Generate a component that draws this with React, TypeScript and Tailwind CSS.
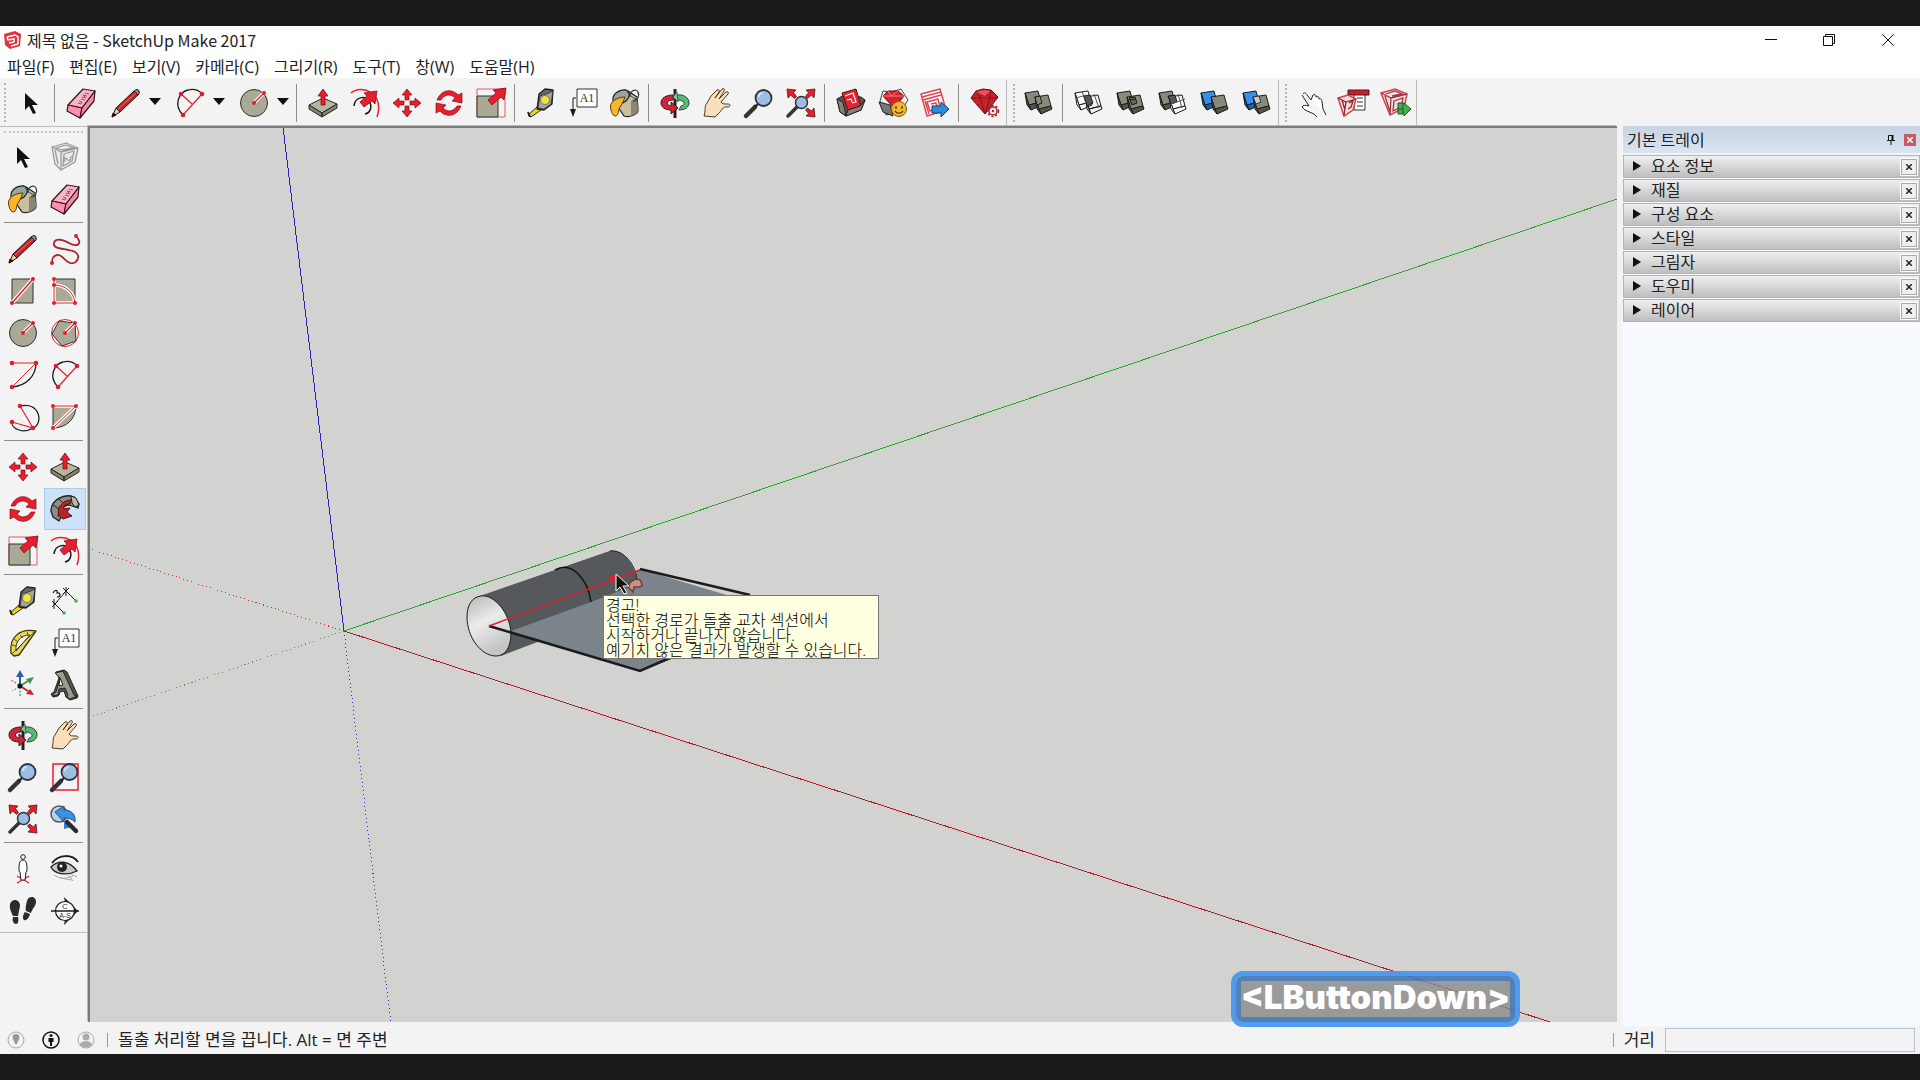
import type { ReactNode } from 'react';

const RED = '#e81e2d';
const INK = '#1c1c1c';
const STONE = '#a9a996';

const dots = (points: number[][], r = 2) =>
  points.map(([x, y]) => <circle key={`${x}-${y}`} cx={x} cy={y} r={r} fill="#d81f33" />);

const lens = (
  <>
    <path d="M2 28L11 19" stroke="#333" strokeWidth="4.5" strokeLinecap="round" />
    <path d="M11 19L14 16" stroke="#222" strokeWidth="2" />
    <circle cx="19.5" cy="10" r="8" fill="#9dbde2" stroke="#2b3440" strokeWidth="1.8" />
    <path d="M14.5 9a5 5 0 0 1 4-4" stroke="#d8e8f8" fill="none" strokeWidth="1.5" />
  </>
);

const cornerArrows = (
  <g fill={RED} stroke="#3a0d10" strokeWidth=".7">
    <path d="M1 1l9 1-2.5 2.5 3 4-2 2-4-3.5L2 10z" />
    <path d="M29 1l-9 1 2.5 2.5-3 4 2 2 4-3.5L28 10z" />
    <path d="M29 29l-9-1 2.5-2.5-3-3.5 2-2 4 3L28 20z" />
  </g>
);

const solid = (dx: number, dy: number, fill: string, side: string) => (
  <g transform={`translate(${dx} ${dy})`} stroke={INK} strokeWidth="1" strokeLinejoin="round">
    <path d="M1 3L14 1l3 11-12 3z" fill={fill} />
    <path d="M5 15l12-3 1 3-11 5z" fill={side} />
    <path d="M1 3l4 12 2 5-4-5z" fill={side} />
  </g>
);

const icons: Record<string, ReactNode> = {
  select: <path d="M9 5v17l4-4 4 8 3-1-4-8h6z" fill="#111" />,
  component: (
    <g fill="none" stroke="#9a9a9a" strokeWidth="1.3" strokeLinejoin="round">
      <path d="M2 5L16 1l12 5-3 14-14 8L5 22z" fill="#ececec" />
      <path d="M2 5l9 5 17-4M11 10v18M5 8l3 14M14 12l10-3-2 10-9 5zM6 6l10-3 8 3-12 2z" />
      <path d="M15 20c-1-4 2-4 3-2s3-1 3-4M13 15l4 2" />
    </g>
  ),
  eraser: (
    <g stroke="#33151c" strokeWidth="1.2" strokeLinejoin="round">
      <path d="M17 1l12 2-13 17L2 17z" fill="#f7b5c8" />
      <path d="M2 17l-1 6 13 7 2-10z" fill="#ff8fb0" />
      <path d="M29 3l-1 10-14 17 2-10z" fill="#f48aa8" />
      <path d="M12 15l3 1 1-2-3-1m2-2l4 1m-3-3l4 1-3-3 4 1m-2-3l4 1" stroke="#8c3550" fill="none" strokeWidth=".8" />
    </g>
  ),
  pencil: (
    <g stroke="#2a1010" strokeWidth="1" strokeLinejoin="round">
      <path d="M1 29l4-9 4 4z" fill="#e0cda0" />
      <path d="M5 20L23 3l4 4L9 24z" fill="#c3252e" />
      <path d="M23 3q4-3 5 0t-1 4z" fill="#8b8b8b" />
      <path d="M7 21L25 5" stroke="#ef6a67" fill="none" />
      <path d="M1 29l1-4 3 2z" fill="#111" />
    </g>
  ),
  freehand: (
    <>
      <path
        d="M26 2C34 11 26 13 19 9S5 4 4 9c-2 7 14 5 21 9s1 13-5 11-8-9-13-8-5 5-5 8"
        fill="none"
        stroke="#a82431"
        strokeWidth="1.8"
      />
      {dots([[26, 2], [2, 29]])}
    </>
  ),
  rectangle: (
    <>
      <path d="M4 3h21v24H4z" fill={STONE} stroke="#333" />
      <path d="M4 27L25 3" stroke="#fff" strokeWidth="4" />
      <path d="M4 27L25 3" stroke={RED} strokeWidth="1.5" />
      {dots([[4, 27], [25, 3]])}
    </>
  ),
  rotatedRectangle: (
    <>
      <path d="M4 3h21v24H4z" fill={STONE} stroke="#333" />
      <path d="M4 3v24h21M4 9c12 0 20 8 21 18" stroke="#fff" strokeWidth="3.5" fill="none" />
      <path d="M4 3v24h21M4 9c12 0 20 8 21 18" stroke={RED} fill="none" />
      {dots([[4, 3], [4, 9], [4, 27], [25, 27]])}
    </>
  ),
  circle: (
    <>
      <circle cx="15" cy="15" r="13.5" fill={STONE} stroke="#333" />
      <path d="M15 15l10-10" stroke="#fff" strokeWidth="3.5" />
      <path d="M15 15l10-10" stroke={RED} strokeWidth="1.3" />
      {dots([[15, 15], [25, 5]])}
    </>
  ),
  polygon: (
    <>
      <circle cx="15" cy="15" r="13.5" fill="#fff" stroke={RED} />
      <path d="M25 5L9 3 2 16l10 12 14-5z" fill={STONE} stroke="#333" />
      <path d="M15 15l10-10" stroke="#fff" strokeWidth="3.5" />
      <path d="M15 15l10-10" stroke={RED} strokeWidth="1.3" />
      {dots([[15, 15], [25, 5]])}
    </>
  ),
  arcCenter: (
    <>
      <path d="M28 3c0 13-10 23-24 24" stroke={INK} fill="none" strokeWidth="1.3" />
      <path d="M4 3h24L4 27" stroke={RED} fill="none" />
      {dots([[4, 3], [28, 3], [4, 27]], 2.3)}
    </>
  ),
  arc: (
    <>
      <path d="M8 27C-2 17 4 4 13 2c7-2 12 1 14 4" stroke={INK} fill="none" strokeWidth="1.3" />
      <path d="M6 6l11 10M8 27L27 6" stroke={RED} fill="none" strokeWidth="1.2" />
      {dots([[6, 6], [27, 6], [8, 27]], 2.3)}
    </>
  ),
  arcThree: (
    <>
      <path d="M12 4c20-5 24 18 13 22-12 7-22-1-21-6" stroke={INK} fill="none" strokeWidth="1.3" />
      <path d="M12 4l13 22L4 20" stroke={RED} fill="none" strokeWidth="1.2" />
      {dots([[12, 4], [25, 26], [4, 20]], 2.3)}
    </>
  ),
  pie: (
    <>
      <path d="M3 4h23c0 12-9 22-23 22z" fill={STONE} stroke="#333" />
      <path d="M3 4h23L3 26" stroke="#fff" strokeWidth="3.5" fill="none" />
      <path d="M3 4h23L3 26" stroke={RED} fill="none" />
      {dots([[3, 4], [26, 4], [3, 26]])}
    </>
  ),
  pushPull: (
    <g stroke="#262620" strokeLinejoin="round">
      <path d="M1 17l14-7 14 6-15 9z" fill="#b5b5a0" />
      <path d="M1 17v4l13 8v-4zM29 16v4l-15 9v-4z" fill="#84846f" />
      <path d="M15 1l5 7h-3v9h-4V8h-3z" fill={RED} stroke="#7c1017" strokeWidth=".8" />
    </g>
  ),
  offset: (
    <>
      <path d="M1 5C12-4 35 5 27 29" stroke={RED} fill="none" strokeWidth="1.5" />
      <path d="M4 18c1-9 11-11 15-5s1 12-4 13" stroke={INK} fill="none" strokeWidth="1.5" />
      <path d="M27 3l-2 13-3-3-8 6-4-5 7-6-3-3z" fill={RED} stroke="#7c1017" strokeWidth=".8" />
    </>
  ),
  move: (
    <g fill={RED} stroke="#7c1017" strokeWidth=".7">
      <path d="M15 1l5 6h-3v5h-4V7h-3z" />
      <path d="M15 29l5-6h-3v-5h-4v5h-3z" />
      <path d="M1 15l6-5v3h5v4H7v3z" />
      <path d="M29 15l-6-5v3h-5v4h5v3z" />
    </g>
  ),
  rotate: (
    <g fill={RED} stroke="#7c1017" strokeWidth=".7">
      <path d="M3 12C8 0 19 1 24 7l4-2v10l-10-2 3-3C16 5 10 7 7 12z" />
      <path d="M27 18C22 30 11 29 6 23l-4 2V15l10 2-3 3c5 5 11 3 14-2z" />
    </g>
  ),
  scale: (
    <>
      <path d="M1 1h28v28H1z" fill="none" stroke="#e05a68" />
      <path d="M1 8h21v21H1z" fill={STONE} stroke="#333" />
      <path d="M30 0l-2 12-3-3-9 8-4-5 8-7-3-3z" fill={RED} stroke="#7c1017" strokeWidth=".8" />
    </>
  ),
  followMe: (
    <g strokeLinejoin="round">
      <path d="M1 17C1 6 14-1 24 3l5 7-1 4-9-3c-6 0-8 5-7 10l-3 6-6-4z" fill="#8d8d82" stroke="#222" strokeWidth="1.3" />
      <path d="M21 2l5 2 3 7-4 2-3-4z" fill="#b8b8a8" stroke="#222" />
      <path d="M3 11l6 4-1 8M9 5l5 5" fill="none" stroke="#222" />
      <path d="M21 6l-1 4c-5 0-7 2-6 5l6-1-3 4 5 4-9 3c-5-3-6-8-3-13 3-4 7-6 11-6z" fill="#b9232c" stroke="#5d0e12" />
    </g>
  ),
  tape: (
    <g stroke="#222" strokeLinejoin="round">
      <path d="M2 27l9-8 4 3-10 7z" fill="#e8d522" />
      <path d="M2 24l2 5" strokeWidth="2" />
      <path d="M13 6l6-5 8 1-1 14-8 6-7-1z" fill="#666a64" strokeWidth="1.3" />
      <path d="M14 8l9-3 4-2-2 13-7 5-6-1z" fill="#a4a69c" strokeWidth=".7" />
      <circle cx="19" cy="12" r="4.5" fill="#efe53b" stroke="#777" />
    </g>
  ),
  dimension: (
    <>
      <path d="M5 18L16 5M5 18l9 9M16 5l9 9M2 15l6 6m0-6l-6 6m2-8v10M13 2l6 6m0-6l-6 6m3-7v9" stroke={INK} fill="none" />
      <path d="M3 7c2-4 5-3 4 0 4-1 4 4 0 4" stroke={INK} fill="none" strokeWidth="1.2" />
      <circle cx="14" cy="27" r="1.8" fill="#46b450" />
      <circle cx="26" cy="15" r="1.8" fill="#46b450" />
    </>
  ),
  protractor: (
    <g stroke="#3d3510" strokeLinejoin="round">
      <path d="M28 3C12 0 1 9 3 25l3 3 5-1z" fill="#ead957" strokeWidth="1.3" />
      <path d="M22 7C13 7 7 13 8 23z" fill="#f4f4f4" />
      <path d="M5 25L26 4M4 17l4 1m-2-7l4 3m2-7l3 3m4-6l1 3" fill="none" strokeWidth=".8" />
    </g>
  ),
  text: (
    <>
      <path d="M9 1h20v18H9z" fill="#fff" stroke="#333" />
      <path d="M8 10H5v11" stroke={INK} fill="none" />
      <path d="M2 21h6l-3 8z" fill={INK} />
      <text x="19" y="14" textAnchor="middle" fontSize="12" fontFamily="Liberation Serif, serif" fill="#333">
        A1
      </text>
    </>
  ),
  axes: (
    <g transform="translate(-2 0)">
      <path d="M14 16V5" stroke="#2f5fa5" strokeWidth="2" />
      <path d="M14 0l4 7h-8z" fill="#2f5fa5" />
      <path d="M14 16l8-5" stroke="#3e9a4b" strokeWidth="2" />
      <path d="M28 7l-4 7-4-5z" fill="#3e9a4b" />
      <path d="M14 16l8 5" stroke="#c4202c" strokeWidth="2" />
      <path d="M28 25l-8-1 4-5z" fill="#c4202c" />
      <path d="M14 17v10" stroke="#2f5fa5" strokeDasharray="2 1.5" />
      <path d="M13 17l-7 4" stroke="#3e9a4b" strokeDasharray="2 1.5" />
      <path d="M13 15l-8-5" stroke="#c4202c" strokeDasharray="2 1.5" />
      <circle cx="14" cy="16" r="2.5" fill="#111" />
    </g>
  ),
  text3d: (
    <g stroke="#222" strokeLinejoin="round">
      <path d="M6 2l8-2 3 2 11 24-1 2-7 2-4-3-2-6-4 1-2 4-5 1-2-3 3-2 5-14z" fill="#55554e" />
      <path d="M5 3l8-2 11 24 3 1-7 3-3-2 1-2-3-7-6 1-1 4 2 1-7 2v-2l3-2 4-14z" fill="#9a9a90" />
      <path d="M10 8l3 7-4 1z" fill="#f3f3f3" />
    </g>
  ),
  paint: (
    <g strokeLinejoin="round" transform="translate(-1 0)">
      <path d="M5 13L19 3l9 6 1 13c0 4-8 8-14 6z" fill="#c9bf9f" stroke="#222" strokeWidth="1.3" />
      <path d="M22 13l6-4 1 13c0 3-4 5-7 6z" fill="#8a8672" />
      <path d="M4 13C3 6 10 1 17 2c5 2 4 7 0 11-4 3-9 3-13 0z" fill="#93a6a5" stroke="#222" strokeWidth="1.3" />
      <path d="M18 3c2 3 4 6 9 8" fill="none" stroke="#333" />
      <path d="M21 9c-1-6 6-9 8-5s-1 9-5 9" fill="none" stroke="#333" strokeWidth="1.2" />
      <path d="M16 9C8 9-1 14 2 22c1 4 2 6 5 6 3-1 2-6 4-9s3-5 5-10z" fill="#f8b62d" stroke="#5a3b00" />
    </g>
  ),
  orbit: (
    <g strokeLinejoin="round">
      <path d="M15 1v29" stroke="#222" strokeWidth="3" />
      <path d="M17 7c7-1 12 3 12 8 0 4-4 7-10 7l2-4c5-1 4-6-4-6z" fill="#57b87c" stroke="#1d4f31" />
      <path d="M13 7C6 7 1 10 1 15c0 4 4 7 10 7v4l7-6-7-6v4c-5-1-5-6 2-6z" fill="#c6283a" stroke="#551018" />
      <path d="M17 4l-4 5 5 5z" fill="#7dcc98" stroke="#1d4f31" strokeWidth=".7" />
    </g>
  ),
  pan: (
    <path
      d="M2 28C4 22 2 19 5 15l4-7 6-6c2-1 3 1 2 2l-4 6 7-9c2-1 3 0 2 2l-5 8 7-7c2-1 3 1 2 2l-7 8c1 2 3 2 7 2 3 0 2 3 0 3-6-1-6 4-10 7l-3 3z"
      fill="#f9dfb8"
      stroke="#4a3a28"
      strokeLinejoin="round"
    />
  ),
  zoom: lens,
  zoomWindow: (
    <>
      <path d="M3 2h25v26H3z" fill="none" stroke={RED} strokeWidth="1.5" />
      {lens}
    </>
  ),
  zoomExtents: (
    <>
      <path d="M2 28l9-9" stroke="#333" strokeWidth="3.5" strokeLinecap="round" />
      {cornerArrows}
      <circle cx="15.5" cy="14.5" r="6" fill="#9dbde2" stroke="#2b3440" strokeWidth="1.5" />
    </>
  ),
  previous: (
    <g strokeLinejoin="round">
      <circle cx="9" cy="10" r="8" fill="#b8cfe8" stroke="#555" strokeWidth="1.5" />
      <path d="M5 8l9-6v4c7 0 12 4 11 12-3-3-6-4-11-4v4z" fill="#3d8fe0" stroke="#1d4f86" />
      <path d="M14 17c2 4 6 5 8 6l-8 2" fill="#2f7fd0" />
      <path d="M17 18l9 9" stroke="#2b2b2b" strokeWidth="4.5" strokeLinecap="round" />
    </g>
  ),
  positionCamera: (
    <>
      <path d="M9 29l12-7M9 22l12 7" stroke={RED} strokeWidth="1.3" />
      <path d="M15 6c-4 0-4 5-4 11l1 1 1 8h4l1-8 1-1c0-6 0-11-4-11z" fill="#fff" stroke={INK} />
      <circle cx="15" cy="3" r="2.3" fill="#fff" stroke={INK} />
    </>
  ),
  lookAround: (
    <>
      <path d="M2 9C9 0 22 0 28 8" stroke={INK} fill="none" strokeWidth="2" />
      <path d="M1 13c7-7 18-7 26 4-8 4-18 4-24-1z" fill="#c8c8c8" stroke="#222" strokeWidth="1.3" />
      <circle cx="12" cy="13" r="5" fill="#222" />
      <circle cx="11" cy="12" r="1.5" fill="#fff" />
      <path d="M4 21c6 4 12 4 19 1M10 24l12 2m-4-5l5 6m-2-7l6 3" stroke="#aaa" fill="none" />
    </>
  ),
  walk: (
    <g fill="#2b2b2b">
      <path d="M2 8c2-6 10-5 10 2l-2 10H5C3 16 1 12 2 8z" />
      <path d="M5 21h5c1 4 0 7-2 7-3 0-4-4-3-7z" />
      <path d="M19 5c1-5 9-6 9 1 0 4-4 7-5 11l-5-2c-1-3 0-6 1-10z" />
      <path d="M17 16l5 2c-1 4-4 7-6 6-2-2-1-5 1-8z" />
    </g>
  ),
  section: (
    <>
      <path d="M14 1l14 14-14 14 1-5 9-9-9-9z" fill={INK} />
      <circle cx="15" cy="15" r="9.5" fill="#fff" stroke={INK} strokeWidth="1.2" />
      <path d="M1 15h28" stroke={INK} strokeWidth="1.5" />
      <text x="15" y="13" textAnchor="middle" fontSize="8" fontFamily="Liberation Sans, sans-serif" fill="#333">
        C
      </text>
      <text x="15" y="22" textAnchor="middle" fontSize="7" fontFamily="Liberation Sans, sans-serif" fill="#333">
        A-S
      </text>
    </>
  ),
  warehouse: (
    <g strokeLinejoin="round">
      <path d="M1 11l7-4 17 2 4 3-4 10-15 6-6-4z" fill="#5d544d" stroke="#222" />
      <path d="M6 5l14-4 5 17-13 4z" fill="#e02531" stroke="#5d0e12" />
      <path d="M9 8l8-3 3 9-4 1M11 12l4-1 1 3" fill="none" stroke="#fff" strokeWidth="1.2" />
      <path d="M1 11l6 3 3 14-6-4zM29 12l-5 6-12 4-2 6 15-6z" fill="#8a8078" stroke="#222" />
    </g>
  ),
  extensionWarehouse: (
    <g strokeLinejoin="round">
      <path d="M2 13l3-10 9 1 9-3 7 11-7 11-15 4z" fill="#eee" stroke="#444" />
      <path d="M5 8l5-5h10l6 5-10 12z" fill="#d7212e" stroke="#5d0e12" />
      <path d="M5 8h21M10 3l3 5 7-5" stroke="#f78080" fill="none" />
      <path d="M1 14l11 3 3 11-10-4z" fill="#777" stroke="#222" />
      <circle cx="21" cy="21" r="7.5" fill="#f4b72b" stroke="#8b5d0a" />
      <path d="M18 18v3m6-3v3m-7 2c2 3 6 3 8 0" stroke="#3d2a00" fill="none" strokeWidth="1.2" />
    </g>
  ),
  layout: (
    <g strokeLinejoin="round">
      <path d="M1 6l19-5 6 21-19 6z" fill="#fff" stroke="#e0434f" strokeWidth="1.5" />
      <path d="M2 9l19-5M3 12l18-5M7 14l11-3 2 9-10 3zM11 16l5-1 1 4-5 1M5 13l4 13" stroke="#e0434f" fill="none" strokeWidth="1.5" />
      <path d="M12 18h9v-4l8 7-8 8v-4h-9z" fill="#2f8be0" stroke="#123c68" />
    </g>
  ),
  extensionManager: (
    <g strokeLinejoin="round">
      <path d="M1 10l5-7 7-2 8 1 7 7-13 17z" fill="#c8202c" stroke="#5d0e12" />
      <path d="M1 10h27M6 3l4 7 4-8 6 8 1-8M10 10l5 16 5-16" stroke="#7d0f18" fill="none" strokeWidth=".8" />
      <path d="M6 4l8-2 6 1-5 5z" fill="#ef5058" />
      <circle cx="23" cy="23" r="4" fill="#f3f3f3" stroke="#a8232c" strokeWidth="1.5" />
      <circle cx="23" cy="23" r="5.5" fill="none" stroke="#a8232c" strokeWidth="1.5" strokeDasharray="2 2" />
      <circle cx="23" cy="23" r="1.2" fill="#a8232c" />
    </g>
  ),
  outerShell: (
    <>
      {solid(0, 2, '#8a8a7c', '#55554a')}
      {solid(10, 6, '#8a8a7c', '#55554a')}
      <path d="M11 9l5-1 2 7-5 2z" fill="#8a8a7c" stroke={INK} />
    </>
  ),
  intersect: (
    <>
      {solid(0, 2, '#fff', '#fff')}
      {solid(10, 6, 'none', 'none')}
      <path d="M10 8l6-1 3 8-6 3z" fill="#555" stroke={INK} />
      <path d="M2 10l10-3M8 3l4 13M20 6l5 14" stroke="#555" fill="none" />
    </>
  ),
  union: (
    <>
      {solid(0, 2, '#8a8a7c', '#55554a')}
      {solid(10, 6, '#8a8a7c', '#55554a')}
      <path d="M13 10l6-1 2 6-5 2zM14 12l6-1" fill="#66665c" stroke={INK} />
    </>
  ),
  subtract: (
    <>
      {solid(0, 2, '#8a8a7c', '#55554a')}
      {solid(10, 6, '#fff', '#fff')}
      <path d="M10 8l7-1 2 7-6 2z" fill="#555" stroke={INK} />
      <path d="M20 6l4 14M13 16l14-5" stroke="#555" fill="none" />
    </>
  ),
  trim: (
    <>
      {solid(0, 2, '#3490e8', '#1c5fa8')}
      {solid(10, 6, '#8a8a7c', '#55554a')}
    </>
  ),
  split: (
    <>
      {solid(0, 2, '#3490e8', '#1c5fa8')}
      {solid(10, 6, '#8a8a7c', '#55554a')}
      <path d="M11 9l6-1 2 6-5 2z" fill="#c9c9d0" stroke="#333" />
    </>
  ),
  interact: (
    <path
      d="M7 6c1-2 3-1 4 1l4 5 2-5c2-1 3 0 3 2 2-1 3 0 3 2 2-1 3 1 3 3l1 7 3 6M21 29l-3-3-9-4-3-3c1-2 3-2 7-1L6 7"
      fill="#fff"
      stroke="#222"
      strokeLinejoin="round"
    />
  ),
  componentOptions: (
    <>
      <path d="M16 4h11v18H16z" fill="#fff" stroke="#333" />
      <path d="M19 10h6m-6 4h6m-6 4h6" stroke="#333" />
      <path d="M10 2h21v5H10z" fill="#c4202c" stroke="#5d0e12" />
      <path d="M0 10l10-3 8 4-3 11-9 6z" fill="#f0dfe0" stroke="#d8404c" strokeWidth="1.5" />
      <path d="M0 10l8 4 10-3M8 14l-2 13M4 12l3 10M11 15l4-2-2 6-3 2" fill="none" stroke="#8a2830" strokeWidth="1.3" />
    </>
  ),
  componentAttributes: (
    <>
      <path d="M1 5l14-4 12 5-3 14-14 7z" fill="#f0dfe0" stroke="#d8404c" strokeWidth="1.5" />
      <path d="M1 5l10 5 16-4M11 10l-1 17M5 8l5 16M14 13l9-3-2 9-8 4zM6 6l9-3 7 3-10 2" fill="none" stroke="#9a3a42" strokeWidth="1.3" />
      <path d="M18 15h6l7 6-7 7v-2h-6z" fill="#45ad4e" stroke="#1c5a24" />
      <path d="M18 21h5M23 15v11" stroke="#1c5a24" />
    </>
  ),
};

const Icon = ({ name }: { name: string }) => (
  <svg width="30" height="30" viewBox="0 0 30 30" className="shrink-0 overflow-visible" aria-hidden="true">
    {icons[name]}
  </svg>
);

function ToolButton({ name, active = false }: { name: string; active?: boolean }) {
  return (
    <button
      type="button"
      aria-label={name}
      className={
        active
          ? 'flex size-[42px] items-center justify-center border border-[#a9cdef] bg-[#cce2f8]'
          : 'flex size-[42px] items-center justify-center'
      }
    >
      <Icon name={name} />
    </button>
  );
}

function DropdownTool({ name }: { name: string }) {
  return (
    <div className="flex h-[42px] w-16 items-center">
      <button type="button" aria-label={name} className="flex h-full w-[47px] items-center justify-center">
        <Icon name={name} />
      </button>
      <button type="button" aria-label={`${name} options`} className="h-full">
        <svg width="12" height="12" viewBox="0 0 12 12" aria-hidden="true">
          <path d="M0 1h12L6 8z" fill="#111" />
        </svg>
      </button>
    </div>
  );
}

const Separator = () => <div className="ml-0.5 mr-[5px] h-[38px] w-px bg-[#8f8f8f]" />;

const Grip = () => (
  <div className="flex h-[46px] w-3 border-l border-[#b9b9b9] py-1 pl-1.5">
    <div className="border-l-2 border-dotted border-[#b5b5b5]" />
  </div>
);

const topGroups = [
  ['pushPull', 'offset', 'move', 'rotate', 'scale'],
  ['tape', 'text', 'paint'],
  ['orbit', 'pan', 'zoom', 'zoomExtents'],
  ['warehouse', 'extensionWarehouse', 'layout'],
  ['extensionManager'],
];

const sideGroups = [
  ['select', 'component', 'paint', 'eraser'],
  ['pencil', 'freehand', 'rectangle', 'rotatedRectangle', 'circle', 'polygon', 'arcCenter', 'arc', 'arcThree', 'pie'],
  ['move', 'pushPull', 'rotate', 'followMe', 'scale', 'offset'],
  ['tape', 'dimension', 'protractor', 'text', 'axes', 'text3d'],
  ['orbit', 'pan', 'zoom', 'zoomWindow', 'zoomExtents', 'previous'],
  ['positionCamera', 'lookAround', 'walk', 'section'],
];

const menus = ['파일(F)', '편집(E)', '보기(V)', '카메라(C)', '그리기(R)', '도구(T)', '창(W)', '도움말(H)'];

const panels = ['요소 정보', '재질', '구성 요소', '스타일', '그림자', '도우미', '레이어'];

function TitleBar() {
  return (
    <header className="flex h-7 items-center bg-white pl-1">
      <svg width="17" height="18" viewBox="0 0 17 18" aria-hidden="true">
        <path d="M0 3l11-3 6 3-1 12-10 3-5-4z" fill="#e0333c" />
        <path d="M3 6l8-2 3 2v7l-7 2M3 6l1 3 6-1v3l-5 1" fill="none" stroke="#fff" strokeWidth="1.5" />
      </svg>
      <h1 className="ml-1.5 flex-1 font-['Noto_Sans_CJK_KR',sans-serif] text-base text-[#222]">
        제목 없음 - SketchUp Make 2017
      </h1>
      <button type="button" aria-label="최소화" className="flex h-full w-[58px] items-center justify-center">
        <svg width="12" height="12" aria-hidden="true">
          <path d="M0 5.5h12" stroke="#111" />
        </svg>
      </button>
      <button type="button" aria-label="이전 크기로" className="flex h-full w-[58px] items-center justify-center">
        <svg width="12" height="12" fill="none" stroke="#111" aria-hidden="true">
          <path d="M.5 2.5h9v9h-9zM2.5 2.5v-2h9v9h-2" />
        </svg>
      </button>
      <button type="button" aria-label="닫기" className="flex h-full w-[62px] items-center justify-center pr-0.5">
        <svg width="12" height="12" stroke="#111" aria-hidden="true">
          <path d="M0 0l12 12M12 0L0 12" />
        </svg>
      </button>
    </header>
  );
}

function MenuBar() {
  return (
    <nav className="flex h-6 items-center gap-[15px] bg-white pt-0.5 pl-[7px] text-base leading-5 text-[#222]">
      {menus.map((menu) => (
        <button key={menu} type="button">
          {menu}
        </button>
      ))}
    </nav>
  );
}

function TopToolbar() {
  return (
    <div className="flex h-12 items-center pt-px">
      <div className="flex h-full w-2.5 py-1 pl-1">
        <div className="border-l-2 border-dotted border-[#b5b5b5]" />
      </div>
      <ToolButton name="select" />
      <Separator />
      <ToolButton name="eraser" />
      <DropdownTool name="pencil" />
      <DropdownTool name="arc" />
      <DropdownTool name="circle" />
      {topGroups.map((group) => (
        <div key={group[0]} className="flex items-center">
          <Separator />
          {group.map((name) => (
            <ToolButton key={name} name={name} />
          ))}
        </div>
      ))}
      <Grip />
      <ToolButton name="outerShell" />
      <Separator />
      <ToolButton name="intersect" />
      <ToolButton name="union" />
      <ToolButton name="subtract" />
      <ToolButton name="trim" />
      <ToolButton name="split" />
      <Grip />
      <ToolButton name="interact" />
      <ToolButton name="componentOptions" />
      <ToolButton name="componentAttributes" />
      <div className="h-[46px] w-px bg-[#b9b9b9]" />
    </div>
  );
}

function SideToolbar() {
  return (
    <aside className="w-[88px] shrink-0">
      <div className="border-y border-r border-[#bdbdbd] pt-1">
        <div className="mx-1 mb-[3px] border-t-2 border-dotted border-[#c4c4c4]" />
        {sideGroups.map((group, index) => (
          <div key={group[0] + index}>
            {index > 0 && <div className="mx-1 mt-0.5 mb-[5px] h-px bg-[#8f8f8f]" />}
            <div className="grid grid-cols-[42px_42px] pl-0.5">
              {group.map((name) => (
                <ToolButton key={name} name={name} active={name === 'followMe'} />
              ))}
            </div>
          </div>
        ))}
      </div>
    </aside>
  );
}

function Scene() {
  return (
    <svg className="absolute inset-0 size-full" aria-hidden="true">
      <defs>
        <linearGradient id="inside" x1="0" y1="0" x2=".4" y2="1">
          <stop offset="0" stopColor="#b4b4b4" />
          <stop offset=".5" stopColor="#ececec" />
          <stop offset="1" stopColor="#c4c4c4" />
        </linearGradient>
      </defs>
      {/* axes */}
      <g transform="translate(-90 -128)" fill="none" shapeRendering="crispEdges">
        <path d="M283 127L344 631" stroke="#2626b8" />
        <path d="M344 631L391 1024" stroke="#2f2fa8" strokeDasharray="1 3" />
        <path d="M344 631L1617 199" stroke="#2fa52f" />
        <path d="M344 631L90 717" stroke="#5f8a5f" strokeDasharray="1 3" />
        <path d="M344 631L1550 1022" stroke="#b01c2a" />
        <path d="M344 631L90 549" stroke="#c0303c" strokeDasharray="1 3" />
      </g>
      {/* cylinder crossed by the flat face */}
      <g transform="translate(-90 -128)">
        <path d="M480 596L610 551C622 549 634 564 636 582L540 641 501 656z" fill="#55595c" />
        <path d="M489 626L640 569 790 614 640 671z" fill="#7b838b" />
        <path d="M482 596L610 551C624 549 636 566 637 584L591 602 511 631z" fill="#55595c" />
        <path d="M610 551C624 549 636 566 637 580" fill="none" stroke="#222" />
        <path d="M555 570C572 560 588 580 591 602" fill="none" stroke="#111" strokeWidth="1.5" />
        <path
          d="M481 596C494 594 510 613 511 633C511 648 505 656 496 656C481 656 467 637 467 617C467 605 472 597 481 596z"
          fill="url(#inside)"
          stroke="#1c1c1c"
        />
        <path d="M489 626L640 671 672 657M640 569L750 595" fill="none" stroke="#1b1b1d" strokeWidth="2.5" />
        <path d="M489 626L640 570" stroke="#d8222c" strokeWidth="1.5" />
        <circle cx="613" cy="578" r="3" fill="#e81e2d" />
        <path d="M629 588c-1-7 8-11 12-7l1 5-3 1h-5l-1 5z" fill="#b49a8c" stroke="#9c2a30" strokeWidth="1.5" />
        <path d="M616 574v17l4-4 4 7 3-1-4-7h6z" fill="#111" stroke="#fff" />
      </g>
    </svg>
  );
}

function Viewport() {
  return (
    <main className="relative mb-1 flex-1 border-t-2 border-l-2 border-[#7b7b7b] bg-[#d2d2d0] shadow-[-1px_-1px_0_#b9b9b9]">
      <Scene />
      <div
        role="tooltip"
        className="absolute top-[467px] left-[513px] w-[276px] border border-[#777] bg-[#ffffe1] pt-0.5 pl-0.5 text-base leading-[15px] font-light whitespace-nowrap text-black"
      >
        경고!
        <br />
        선택한 경로가 돌출 교차 섹션에서
        <br />
        시작하거나 끝나지 않습니다.
        <br />
        예기치 않은 결과가 발생할 수 있습니다.
      </div>
      <div className="absolute right-[97px] -bottom-[5px] z-10 rounded-xl border-[5px] border-[#4a98f0]/95">
        <div className="flex h-[46px] w-[279px] items-center justify-center rounded-[7px] border-[5px] border-[#4378b6]/90 bg-[#8c8c8c]/80 bg-clip-padding pb-0.5 font-['Inter',sans-serif] text-[33px] font-black text-white">
          &lt;LButtonDown&gt;
        </div>
      </div>
    </main>
  );
}

function Tray() {
  return (
    <aside className="ml-1.5 flex w-[297px] shrink-0 flex-col bg-[#f7faff]">
      <div className="flex h-[27px] items-center bg-linear-to-b from-[#c6d3e3] to-[#dae5f3] pr-1 pl-1">
        <h2 className="flex-1 text-base text-[#222]">기본 트레이</h2>
        <button type="button" aria-label="고정" className="mr-[9px]">
          <svg width="8" height="10" viewBox="0 0 8 10" fill="none" stroke="#111" aria-hidden="true">
            <path d="M1.5 5V.5h4V5M0 5.5h8M4 6v4" />
            <path d="M5.5 0v5" strokeWidth="2" />
          </svg>
        </button>
        <button type="button" aria-label="트레이 닫기" className="flex size-3 items-center justify-center bg-[#c75c60]">
          <svg width="6" height="6" stroke="#fff" strokeWidth="1.5" aria-hidden="true">
            <path d="M0 0l6 6M6 0L0 6" />
          </svg>
        </button>
      </div>
      <div className="flex flex-col gap-px border-t-2 border-[#f0f2f4]">
        {panels.map((panel) => (
          <div
            key={panel}
            className="flex h-[23px] items-center border border-[#b4b4b4] bg-linear-to-b from-[#f0f0f0] to-[#bebebe] pr-0.5 pl-[9px]"
          >
            <button type="button" className="flex flex-1 items-center gap-2.5 pb-0.5 text-base leading-5 text-[#222]">
              <svg width="8" height="10" aria-hidden="true">
                <path d="M0 0l8 5-8 5z" fill="#111" />
              </svg>
              {panel}
            </button>
            <button
              type="button"
              aria-label={`${panel} 닫기`}
              className="flex size-4 items-center justify-center border border-[#aaa] bg-[#eee] outline outline-white"
            >
              <svg width="6" height="6" stroke="#222" strokeWidth="1.5" aria-hidden="true">
                <path d="M0 0l6 6M6 0L0 6" />
              </svg>
            </button>
          </div>
        ))}
      </div>
    </aside>
  );
}

function StatusBar() {
  return (
    <footer className="flex h-7 items-center pr-[5px] pl-[7px] text-[17px] text-[#222]">
      <button type="button" aria-label="위치" className="mr-[17px]">
        <svg width="18" height="18" viewBox="0 0 18 18" aria-hidden="true">
          <circle cx="9" cy="9" r="8" fill="none" stroke="#aaa" />
          <path d="M9 3c5 0 4 5 0 11C5 8 4 3 9 3z" fill="#999" />
        </svg>
      </button>
      <button type="button" aria-label="저작자" className="mr-[17px]">
        <svg width="18" height="18" viewBox="0 0 18 18" aria-hidden="true">
          <circle cx="9" cy="9" r="8" fill="none" stroke="#111" strokeWidth="1.5" />
          <circle cx="9" cy="4.5" r="1.5" fill="#111" />
          <path d="M6.5 7h5v4H10v4H8v-4H6.5z" fill="#111" />
        </svg>
      </button>
      <button type="button" aria-label="로그인">
        <svg width="18" height="18" viewBox="0 0 18 18" aria-hidden="true">
          <circle cx="9" cy="9" r="8" fill="none" stroke="#aaa" />
          <circle cx="9" cy="6" r="3.5" fill="#aaa" />
          <path d="M3 14c0-5 12-5 12 0-3 3-9 3-12 0z" fill="#aaa" />
        </svg>
      </button>
      <div className="ml-3 mr-2.5 h-3.5 w-px bg-[#999]" />
      <p className="flex-1">돌출 처리할 면을 끕니다. Alt = 면 주변</p>
      <div className="mr-2.5 h-3.5 w-px bg-[#999]" />
      <label htmlFor="distance" className="mr-2.5">
        거리
      </label>
      <input id="distance" type="text" className="h-6 w-[250px] border border-[#b4c2d8] bg-[#f3f3f5] px-1 outline-none" />
    </footer>
  );
}

export default function App() {
  return (
    <div className="flex min-h-screen flex-col border-y-[26px] border-[#1a1a1a] bg-[#f3f3f3] font-['Open_Sans','Noto_Sans_CJK_KR',sans-serif]">
      <TitleBar />
      <MenuBar />
      <TopToolbar />
      <div className="flex flex-1">
        <SideToolbar />
        <Viewport />
        <Tray />
      </div>
      <StatusBar />
    </div>
  );
}
